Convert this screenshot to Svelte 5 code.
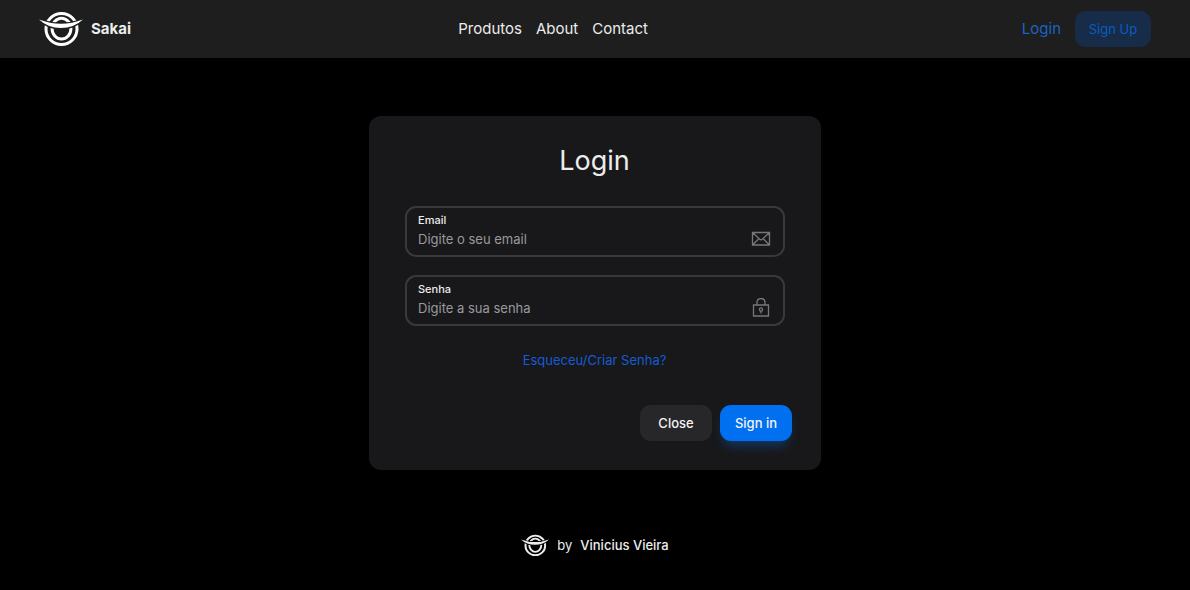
<script>
  let email = $state('');
  let password = $state('');
</script>

{#snippet logo(id)}
  <svg class="logo" viewBox="0 0 44 36" aria-hidden="true">
    <mask id={id}>
      <rect width="44" height="36" fill="#fff" />
      <path d="M0 8.500Q22 17 44 8.500Q35 17.500 22 17.500Q9 17.500 0 8.500Z" fill="#000" stroke="#000" stroke-width="2" />
    </mask>
    <g fill="none" stroke="currentColor" mask="url(#{id})">
      <circle cx="22.500" cy="18" r="15.500" stroke-width="3" />
      <ellipse cx="22.500" cy="17.700" rx="9.400" ry="10.400" stroke-width="3" />
    </g>
    <path d="M0 8.500Q22 17 44 8.500Q35 17 22 17Q9 17 0 8.500Z" fill="currentColor" />
  </svg>
{/snippet}

<div class="page">
  <header>
    <a class="brand" href="#home">{@render logo('brand-mask')}<strong>Sakai</strong></a>
    <nav>
      <a href="#produtos">Produtos</a>
      <a href="#about">About</a>
      <a href="#contact">Contact</a>
    </nav>
    <div class="account">
      <a href="#login">Login</a>
      <button type="button" class="signup">Sign Up</button>
    </div>
  </header>

  <main>
    <form class="card" onsubmit={(event) => event.preventDefault()}>
      <h1>Login</h1>
      <div class="fields">
        <div class="field">
          <label for="email">Email</label>
          <input id="email" type="email" placeholder="Digite o seu email" bind:value={email} />
          <svg viewBox="0 0 20 20" aria-hidden="true">
            <path d="M1.500 3.500H18.500V16H1.500ZM2 4L8.500 10Q10 11.500 11.500 10L18 4M2 15.500L8 9.500M18 15.500L12 9.500" />
          </svg>
        </div>
        <div class="field">
          <label for="password">Senha</label>
          <input id="password" type="password" placeholder="Digite a sua senha" bind:value={password} />
          <svg viewBox="0 0 20 20" aria-hidden="true">
            <path d="M2.500 7H17.500V18H2.500ZM6 7V4.500Q6 .500 10 .500Q14 .500 14 4.500V7M10 13V15.500" />
            <circle cx="10" cy="11.500" r="1.600" />
          </svg>
        </div>
      </div>
      <a class="forgot" href="#senha">Esqueceu/Criar Senha?</a>
      <div class="actions">
        <button type="button" class="close">Close</button>
        <button type="submit" class="signin">Sign in</button>
      </div>
    </form>
  </main>

  <footer>
    {@render logo('footer-mask')}
    <span>by</span>
    <strong>Vinicius Vieira</strong>
  </footer>
</div>

<style>
  :global(body) {
    margin: 0;
    background: #000;
  }
  .page {
    color: #ececec;
    font: 14px/20px Inter, sans-serif;
  }
  a {
    color: inherit;
    text-decoration: none;
  }
  button {
    height: 36px;
    padding: 0;
    border: 0;
    border-radius: 11px;
    font: inherit;
    font-size: 13px;
    cursor: pointer;
  }
  header {
    display: grid;
    grid-template-columns: 5fr auto 6fr;
    align-items: center;
    min-height: 58px;
    padding: 0 39px;
    box-sizing: border-box;
    background: #1e1e1e;
  }
  .brand {
    display: flex;
    align-items: center;
    gap: 8px;
    justify-self: start;
    font-size: 15px;
  }
  .brand .logo {
    width: 44px;
    color: #fff;
  }
  .brand strong {
    font-weight: 700;
  }
  nav {
    display: flex;
    gap: 14px;
    font-size: 15px;
  }
  .account {
    display: flex;
    align-items: center;
    justify-content: flex-end;
    gap: 14px;
    color: #1665c5;
    font-size: 15px;
  }
  .signup {
    width: 76px;
    background: #172c48;
    color: #0b5cbd;
  }
  main {
    display: flex;
    justify-content: center;
    padding: 58px 16px 63px;
  }
  .card {
    display: flex;
    flex-direction: column;
    width: 452px;
    max-width: 100%;
    padding: 27px 29px 29px 28px;
    box-sizing: border-box;
    border-radius: 12px;
    background: #18181a;
  }
  h1 {
    margin: 0;
    font-size: 27px;
    line-height: 36px;
    font-weight: 400;
    text-align: center;
  }
  .fields {
    display: flex;
    flex-direction: column;
    gap: 18px;
    margin: 27px 7px 24px 8px;
  }
  .field {
    display: grid;
    grid-template-columns: 1fr 20px;
    grid-template-rows: 16px 20px;
    row-gap: 1px;
    padding: 4px 12px 6px 11px;
    border: 2px solid #39393c;
    border-radius: 11px;
  }
  label {
    grid-column: 1 / -1;
    font-size: 11px;
    line-height: 16px;
    font-weight: 500;
  }
  input {
    min-width: 0;
    padding: 0;
    border: 0;
    outline: 0;
    background: transparent;
    color: inherit;
    font: inherit;
    font-size: 13px;
  }
  input::placeholder {
    color: #98989f;
    opacity: 1;
  }
  .field:focus-within {
    border-color: #006fee;
  }
  .field svg {
    width: 20px;
    height: 20px;
    fill: none;
    stroke: #77777b;
    stroke-width: 1.3;
  }
  .forgot {
    align-self: center;
    color: #155bd5;
    font-size: 13px;
  }
  .actions {
    display: flex;
    justify-content: flex-end;
    gap: 8px;
    margin-top: 35px;
  }
  .actions button {
    width: 72px;
    color: #f4f4f5;
    font-weight: 500;
  }
  .actions .close {
    background: #27272a;
  }
  .actions .signin {
    background: #0070f0;
    box-shadow: 0 8px 12px -4px #006fee66;
  }
  footer {
    display: flex;
    align-items: center;
    justify-content: center;
    gap: 8px;
    font-size: 13px;
    line-height: 24px;
  }
  footer .logo {
    width: 28px;
  }
  footer strong {
    font-weight: 500;
  }
</style>
